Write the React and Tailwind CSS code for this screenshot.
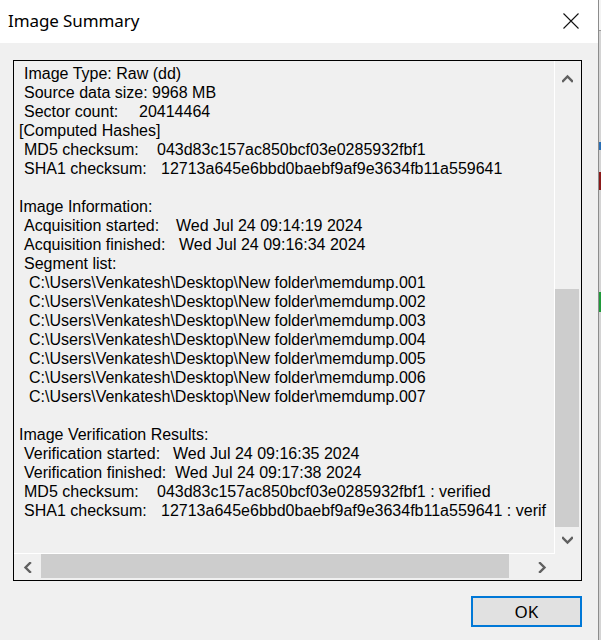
import React from 'react';

const lines = [
    { indent: 1, label: 'Image Type: Raw (dd)' },
    { indent: 1, label: 'Source data size: 9968 MB' },
    { indent: 1, label: 'Sector count:', w: 'w-[115px]', value: '20414464' },
    { indent: 0, label: '[Computed Hashes]' },
    { indent: 1, label: 'MD5 checksum:', w: 'w-[133px]', value: '043d83c157ac850bcf03e0285932fbf1' },
    { indent: 1, label: 'SHA1 checksum:', w: 'w-[137px]', value: '12713a645e6bbd0baebf9af9e3634fb11a559641' },
    { indent: 0, label: '' },
    { indent: 0, label: 'Image Information:' },
    { indent: 1, label: 'Acquisition started:', w: 'w-[152px]', value: 'Wed Jul 24 09:14:19 2024' },
    { indent: 1, label: 'Acquisition finished:', w: 'w-[155px]', value: 'Wed Jul 24 09:16:34 2024' },
    { indent: 1, label: 'Segment list:' },
    ...['001', '002', '003', '004', '005', '006', '007'].map((n) => ({
        indent: 2,
        label: `C:\\Users\\Venkatesh\\Desktop\\New folder\\memdump.${n}`,
    })),
    { indent: 0, label: '' },
    { indent: 0, label: 'Image Verification Results:' },
    { indent: 1, label: 'Verification started:', w: 'w-[149px]', value: 'Wed Jul 24 09:16:35 2024' },
    { indent: 1, label: 'Verification finished:', w: 'w-[151px]', value: 'Wed Jul 24 09:17:38 2024' },
    { indent: 1, label: 'MD5 checksum:', w: 'w-[133px]', value: '043d83c157ac850bcf03e0285932fbf1 : verified' },
    // the box is scrolled hard left, so this one runs into the scrollbar
    { indent: 1, label: 'SHA1 checksum:', w: 'w-[137px]', value: '12713a645e6bbd0baebf9af9e3634fb11a559641 : verif' },
];

const indents = ['pl-0', 'pl-[5px]', 'pl-[10px]'];

// little scrollbar chevrons, drawn thick like the win10 ones
const Chevron = ({ dir }) => {
    const pts = {
        up: '1,7 5.5,2.5 10,7',
        down: '1,2 5.5,6.5 10,2',
        left: '7,1 2.5,5.5 7,10',
        right: '2,1 6.5,5.5 2,10',
    }[dir];
    const vertical = dir === 'up' || dir === 'down';
    return (
        <svg width={vertical ? 11 : 9} height={vertical ? 9 : 11} viewBox={vertical ? '0 0 11 9' : '0 0 9 11'}>
            <polyline points={pts} fill="none" stroke="#606060" strokeWidth="2.4" strokeLinecap="square" />
        </svg>
    );
};

const App = () => {
    return (
        <div className="flex w-[601px] h-[640px] overflow-hidden bg-[#f0f0f0] font-['Liberation_Sans',Arial,sans-serif]">
            <div className="flex flex-col w-[599px] h-full border-r border-[#8c8c8c]">
                {/* title bar */}
                <div className="flex items-center justify-between h-[43px] bg-white pl-[8px] pr-[19px]">
                    <span className="text-[17px] text-black font-['Noto_Sans',sans-serif] -mt-[1px] tracking-[-0.1px]">Image Summary</span>
                    <svg width="16" height="16" viewBox="0 0 16 16" className="-mt-[2px]">
                        <path d="M0.5 0.5 L15.5 15.5 M15.5 0.5 L0.5 15.5" stroke="#111" strokeWidth="1.1" />
                    </svg>
                </div>

                <div className="flex flex-col flex-1 pt-[17px] pl-[13px] pr-[16px]">
                    {/* read-only text box */}
                    <div className="flex flex-col w-[569px] h-[521px] border border-black">
                        <div className="flex h-[492px]">
                            <div className="flex-1 overflow-hidden pt-[3px] pl-[5px] text-[16px] text-black">
                                {lines.map((l, i) => (
                                    <div key={i} className={`h-[19px] leading-[19px] whitespace-pre ${indents[l.indent]}`}>
                                        {l.value ? (
                                            <>
                                                <span className={`inline-block ${l.w}`}>{l.label}</span>
                                                <span>{l.value}</span>
                                            </>
                                        ) : (
                                            l.label || '\u00a0'
                                        )}
                                    </div>
                                ))}
                            </div>
                            {/* vertical scrollbar */}
                            <div className="flex flex-col w-[27px] border-l border-white">
                                <div className="flex justify-center h-[26px] pt-[13px] pr-[1px]">
                                    <Chevron dir="up" />
                                </div>
                                <div className="flex flex-col justify-end flex-1">
                                    <div className="w-[24px] h-[238px] bg-[#cdcdcd]"></div>
                                </div>
                                <div className="flex items-center justify-center h-[26px] pr-[1px]">
                                    <Chevron dir="down" />
                                </div>
                            </div>
                        </div>
                        {/* horizontal scrollbar */}
                        <div className="flex h-[27px]">
                            <div className="flex w-[541px] border-t border-white">
                                <div className="flex items-center justify-center w-[27px]">
                                    <Chevron dir="left" />
                                </div>
                                <div className="w-[468px] h-[24px] bg-[#cdcdcd]"></div>
                                <div className="flex-1"></div>
                                <div className="flex items-center justify-center w-[26px]">
                                    <Chevron dir="right" />
                                </div>
                            </div>
                            <div className="flex-1"></div>
                        </div>
                    </div>

                    <div className="flex justify-end pt-[15px]">
                        <button className="w-[111px] h-[31px] bg-[#e1e1e1] border-2 border-[#0078d7] text-[17px] text-black font-['Noto_Sans',sans-serif] leading-none">
                            OK
                        </button>
                    </div>
                </div>
            </div>

            {/* sliver of the window behind */}
            <div className="flex flex-col w-[2px] h-full bg-[#d4d4d4]">
                <div className="h-[30px] bg-[#f4f4f4]"></div>
                <div className="h-[1px] bg-[#999]"></div>
                <div className="h-[111px]"></div>
                <div className="h-[8px] bg-[#2a6fb5]"></div>
                <div className="h-[22px]"></div>
                <div className="h-[18px] bg-[#8b1a1a]"></div>
                <div className="h-[102px]"></div>
                <div className="h-[20px] bg-[#1f9a3a]"></div>
                <div className="flex-1"></div>
            </div>
        </div>
    );
};

export default App;
